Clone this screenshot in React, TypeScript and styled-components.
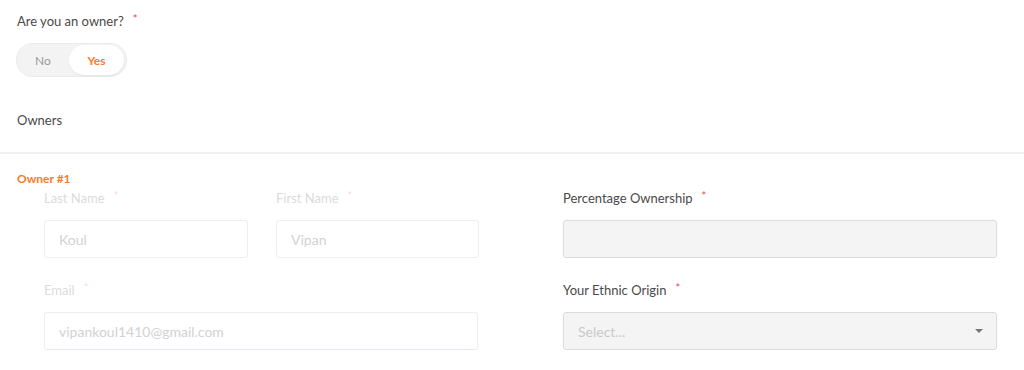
import styled, { createGlobalStyle } from "styled-components"

const GlobalStyle = createGlobalStyle`
    body {
        margin: 0;
        background: #ffffff;
        font-family: "Lato", "Open Sans", sans-serif;
        color: #4a4a4a;
    }
`

const Page = styled.div`
    width: 1024px;
    height: 370px;
    overflow: hidden;
`

const Top = styled.div`
    padding: 13px 17px 0;
`

const Label = styled.div<{ $faded?: boolean }>`
    font-size: 13px;
    line-height: 16px;
    color: #4a4a4a;
    display: flex;
    gap: 9px;
    opacity: ${(p) => (p.$faded ? 0.2 : 1)};
`

const Star = styled.span`
    color: #e8474e;
    font-size: 11px;
    line-height: 11px;
`

const Toggle = styled.div`
    margin: 14px 0 0 -1px;
    width: 107px;
    height: 32px;
    border: 1px solid #ebebeb;
    background: #f3f3f3;
    border-radius: 17px;
    display: flex;
    align-items: center;
    padding: 0 2px 0 0;
`

const Option = styled.div<{ $active?: boolean }>`
    flex: ${(p) => (p.$active ? "0 0 55px" : "1")};
    height: ${(p) => (p.$active ? "30px" : "auto")};
    border-radius: 15px;
    display: flex;
    align-items: center;
    justify-content: center;
    font-size: 12px;
    font-weight: ${(p) => (p.$active ? 700 : 400)};
    color: ${(p) => (p.$active ? "#f47c2c" : "#9a9a9a")};
    background: ${(p) => (p.$active ? "#ffffff" : "transparent")};
    box-shadow: ${(p) => (p.$active ? "0 1px 2px rgba(0,0,0,0.06)" : "none")};
`

const Section = styled.div`
    padding: 35px 17px 0;
    font-size: 13px;
    color: #4a4a4a;
    height: 40px;
`

const Divider = styled.hr`
    margin: 0;
    border: none;
    height: 2px;
    background: #f0f0f0;
`

const OwnerTitle = styled.div`
    padding: 17px 17px 0;
    font-size: 12px;
    font-weight: 700;
    color: #f47c2c;
    line-height: 16px;
`

const Grid = styled.div`
    display: grid;
    grid-template-columns: 434px 434px;
    column-gap: 85px;
    padding: 3px 27px 0 44px;
`

const Column = styled.div`
    display: flex;
    flex-direction: column;
`

const Row = styled.div`
    display: grid;
    grid-template-columns: 204px 203px;
    column-gap: 28px;
`

const Field = styled.div`
    display: flex;
    flex-direction: column;
    margin-bottom: 24px;
`

const Input = styled.div<{ $faded?: boolean; $error?: boolean; $filled?: boolean }>`
    margin-top: 14px;
    box-sizing: border-box;
    height: 38px;
    border: 1px solid ${(p) => (p.$faded ? "#eeeeee" : "#dcdcdc")};
    border-bottom-color: ${(p) => (p.$error ? "#fbe3e5" : p.$faded ? "#eeeeee" : "#dcdcdc")};
    border-radius: 3px;
    background: ${(p) => (p.$filled ? "#f4f4f4" : "#ffffff")};
    display: flex;
    align-items: center;
    justify-content: space-between;
    padding: 0 13px 0 14px;
    font-size: 14px;
    color: ${(p) => (p.$faded ? "#d2d2d2" : "#c9c9c9")};
`

const Caret = styled.span`
    width: 0;
    height: 0;
    border-left: 4px solid transparent;
    border-right: 4px solid transparent;
    border-top: 4px solid #777;
`

export default function App() {
    return <Page>
        <GlobalStyle />
        <Top>
            <Label>Are you an owner? <Star>*</Star></Label>
            <Toggle>
                <Option>No</Option>
                <Option $active>Yes</Option>
            </Toggle>
        </Top>
        <Section>Owners</Section>
        <Divider />
        <OwnerTitle>Owner #1</OwnerTitle>
        <Grid>
            <Column>
                <Row>
                    <Field>
                        <Label $faded>Last Name <Star>*</Star></Label>
                        <Input $faded>Koul</Input>
                    </Field>
                    <Field>
                        <Label $faded>First Name <Star>*</Star></Label>
                        <Input $faded>Vipan</Input>
                    </Field>
                </Row>
                <Field>
                    <Label $faded>Email <Star>*</Star></Label>
                    <Input $faded $error>vipankoul1410@gmail.com</Input>
                </Field>
            </Column>
            <Column>
                <Field>
                    <Label>Percentage Ownership <Star>*</Star></Label>
                    <Input $filled />
                </Field>
                <Field>
                    <Label>Your Ethnic Origin <Star>*</Star></Label>
                    <Input $filled>Select... <Caret /></Input>
                </Field>
            </Column>
        </Grid>
    </Page>
}
